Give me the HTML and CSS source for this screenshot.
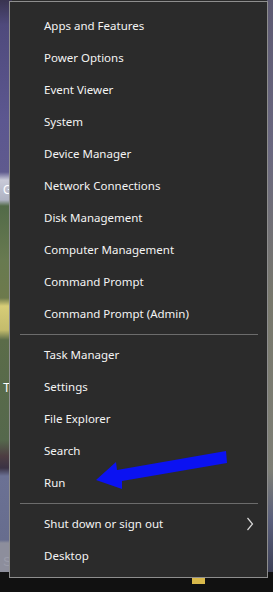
FILE: index.html
```html
<!DOCTYPE html>
<html>
<head>
<meta charset="utf-8">
<link rel="stylesheet" href="styles.css">
</head>
<body>
<div class="desktop">
  <div class="wall">
    <div class="strip-left">
      <span class="label label-g">G</span>
      <span class="label label-t">T</span>
      <span class="start">Start</span>
    </div>
    <div class="mid"></div>
    <div class="strip-right"></div>
  </div>
  <div class="taskbar">
    <span class="tb-icon"></span>
  </div>

  <nav class="menu">
    <ul class="group">
      <li class="item">Apps and Features</li>
      <li class="item">Power Options</li>
      <li class="item">Event Viewer</li>
      <li class="item">System</li>
      <li class="item">Device Manager</li>
      <li class="item">Network Connections</li>
      <li class="item">Disk Management</li>
      <li class="item">Computer Management</li>
      <li class="item">Command Prompt</li>
      <li class="item">Command Prompt (Admin)</li>
    </ul>
    <div class="sep"></div>
    <ul class="group">
      <li class="item">Task Manager</li>
      <li class="item">Settings</li>
      <li class="item">File Explorer</li>
      <li class="item">Search</li>
      <li class="item">Run</li>
    </ul>
    <div class="sep"></div>
    <ul class="group">
      <li class="item sub">Shut down or sign out
        <svg class="chev" width="8" height="14" viewBox="0 0 8 14"><polyline points="1.5,1 6.5,7 1.5,13" fill="none" stroke="#d8d8d8" stroke-width="1.2"/></svg>
      </li>
      <li class="item">Desktop</li>
    </ul>
  </nav>

  <svg class="arrow" width="273" height="592" viewBox="0 0 273 592">
    <polygon points="96,480 116,462 117,470 226,451 227,463 122,481 122,489" fill="#0b12f2"/>
  </svg>
</div>
</body>
</html>
```
FILE: styles.css
```css
* { box-sizing: border-box; }
html, body { margin: 0; padding: 0; }
body {
  width: 273px;
  height: 592px;
  overflow: hidden;
  font-family: "Noto Sans", "Open Sans", sans-serif;
  background: #1b1b1b;
}
.desktop {
  position: relative;
  width: 273px;
  height: 592px;
  display: flex;
  flex-direction: column;
}
.wall {
  flex: 1;
  display: flex;
}
.strip-left {
  width: 12px;
  display: flex;
  flex-direction: column;
  background: linear-gradient(to bottom,
    #393450 0px, #4f4a7c 25px, #5c5790 120px, #5f5a8e 172px,
    #c9cad8 180px, #aeb2c2 200px, #526a48 206px, #687a50 260px,
    #6d7a4c 298px, #d7cd77 306px, #c4bc6c 330px, #5b6c49 340px,
    #55684c 440px, #4d3d42 456px, #3a3244 468px, #6b7194 476px,
    #676d8e 540px, #8d8e9c 543px, #8d8e9c 562px);
}
.label {
  color: #fff;
  font-family: "Liberation Sans", sans-serif;
  font-size: 12px;
  line-height: 14px;
  padding-left: 3px;
}
.label-g { margin-top: 183px; }
.label-t { margin-top: 184px; }
.start {
  margin-top: auto;
  height: 20px;
  margin-bottom: 0;
  color: #9b9caa;
  font-family: "Liberation Sans", sans-serif;
  font-size: 13px;
  line-height: 20px;
  padding-left: 3px;
}
.mid { flex: 1; background: #2b2b2b; }
.strip-right {
  width: 6px;
  background: linear-gradient(to bottom,
    #5d5a72 0px, #6a6880 150px, #78786c 300px, #7e7f76 470px,
    #5a5f7c 520px, #3c3f55 575px);
}
.taskbar {
  height: 20px;
  background: #111;
  position: relative;
}
.tb-icon {
  display: block;
  width: 13px;
  height: 8px;
  margin: 4px 0 0 192px;
  background: #d8b84a;
}
.menu {
  position: absolute;
  left: 9px;
  top: 1px;
  width: 259px;
  height: 577px;
  background: #2b2b2b;
  border: 1px solid #8e8e8e;
  padding-top: 8px;
  display: flex;
  flex-direction: column;
}
.group {
  list-style: none;
  margin: 0;
  padding: 0;
}
.item {
  height: 32px;
  line-height: 32px;
  padding-left: 34px;
  color: #f4f4f4;
  font-size: 11.5px;
  white-space: nowrap;
  display: flex;
  align-items: center;
}
.sub { justify-content: space-between; padding-right: 13px; }
.chev { display: block; }
.sep {
  height: 1px;
  background: #6c6c6c;
  margin: 4px 9px 4px 10px;
}
.arrow {
  position: absolute;
  left: 0;
  top: 0;
  pointer-events: none;
}
```
